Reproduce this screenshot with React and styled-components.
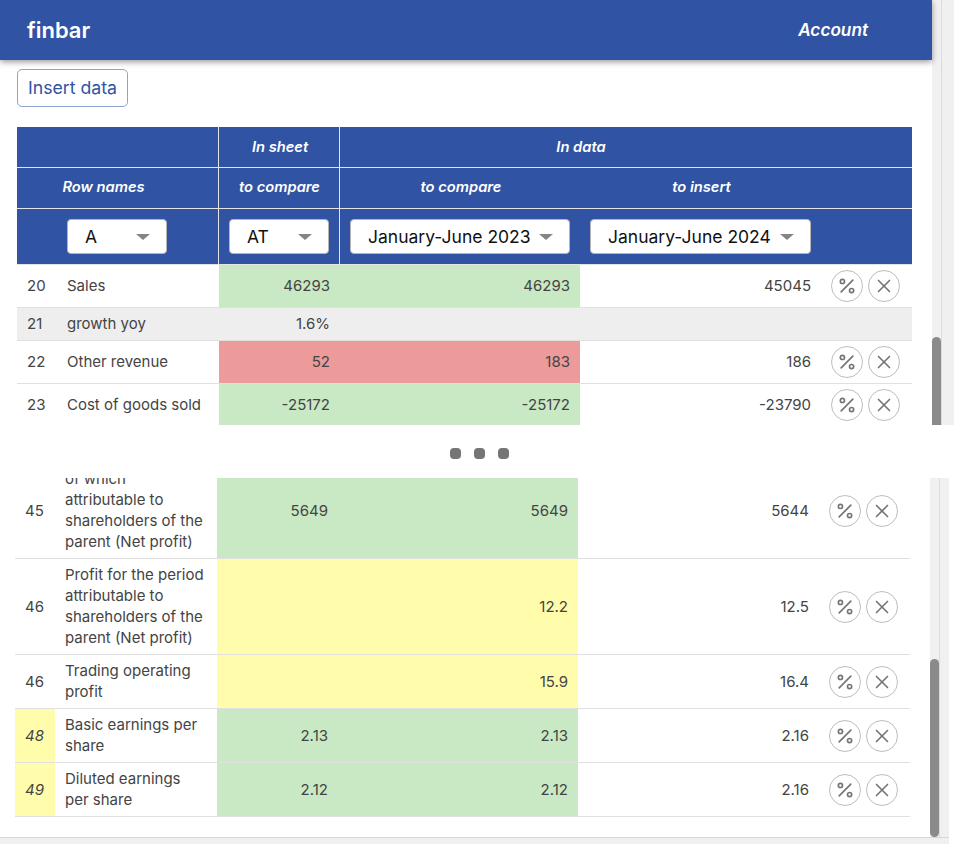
import React from 'react';
import styled, { createGlobalStyle } from 'styled-components';
import { Percent, X } from 'lucide-react';

const GlobalStyle = createGlobalStyle`
  html, body {
    margin: 0;
    padding: 0;
    background: #ffffff;
    overflow: hidden;
  }
  body {
    font-family: Inter, "Liberation Sans", sans-serif;
    font-size: 15px;
    color: #444444;
  }
`;

const Page = styled.div`
  width: 955px;
  height: 845px;
  overflow: hidden;
  display: flex;
  flex-direction: column;
`;

// Upper part of the picture, scrolled to the top of the page
const TopPane = styled.div`
  height: 425px;
  width: 954px;
  flex: none;
  display: flex;
  overflow: hidden;
`;

const TopContent = styled.div`
  width: 932px;
  flex: none;
`;

const Header = styled.header`
  height: 60px;
  background: #3153a4;
  color: #ffffff;
  display: flex;
  align-items: center;
  justify-content: space-between;
  padding: 0 64px 0 27px;
  box-shadow: 0 2px 6px rgba(0, 0, 0, 0.4);
  position: relative;
`;

const Logo = styled.div`
  font-size: 22px;
  font-weight: 600;
`;

const AccountLink = styled.div`
  padding-bottom: 1px;
  font-size: 17.2px;
  font-weight: 600;
  font-style: italic;
`;

const Toolbar = styled.div`
  padding: 9px 0 20px 17px;
`;

const InsertButton = styled.button`
  display: block;
  width: 111px;
  height: 38px;
  padding: 0 0 2px;
  background: #ffffff;
  border: 1px solid #8ea3d3;
  border-radius: 5px;
  color: #3153a4;
  font-family: inherit;
  font-size: 17.7px;
`;

const TableWrap = styled.div`
  padding-left: 17px;
`;

const Table = styled.table`
  width: 895px;
  table-layout: fixed;
  border-collapse: separate;
  border-spacing: 0;
`;

const HeadCell = styled.th`
  height: 40px;
  padding: 0 ${props => props.$shift || 0}px 0 ${props => props.$nudge || 0}px;
  background: #3153a4;
  color: #ffffff;
  font-size: 14.7px;
  font-weight: 600;
  font-style: italic;
  text-align: center;
  border-bottom: 1px solid #e4e4e4;
  border-right: ${props => (props.$divider ? '1px solid #e4e4e4' : 'none')};
`;

const SubHeadCell = styled(HeadCell)`
  height: 38px;
  padding-bottom: 2px;
`;

const SelectCell = styled(HeadCell)`
  height: 55px;
  font-style: normal;
  font-weight: 400;
`;

const SelectBox = styled.div`
  box-sizing: border-box;
  width: ${props => props.$width}px;
  height: 35px;
  margin: 0 auto;
  padding: 0 16px 0 17px;
  display: flex;
  align-items: center;
  justify-content: space-between;
  background: #ffffff;
  border: 1px solid #b5b5b5;
  border-radius: 4px;
  color: #111111;
  font-size: 17.5px;
`;

const Arrow = styled.span`
  width: 0;
  height: 0;
  border-left: 7px solid transparent;
  border-right: 7px solid transparent;
  border-top: 6px solid #858585;
`;

const toneColors = {
  green: '#c8e9c3',
  red: '#ed9a9b',
  yellow: '#fffcac',
  gray: '#eeeeee',
};

const Cell = styled.td`
  padding: 5px 10px 6px 10px;
  line-height: 21px;
  text-align: ${props => (props.$right ? 'right' : 'left')};
  font-style: ${props => (props.$italic ? 'italic' : 'normal')};
  background: ${props => toneColors[props.$tone] || 'transparent'};
  border-bottom: 1px solid #e0e0e0;
  overflow: hidden;
`;

const ActionsCell = styled(Cell)`
  padding: 5px 0 5px 10px;
`;

const Actions = styled.div`
  display: flex;
  gap: 5px;
`;

const RoundButton = styled.button`
  box-sizing: border-box;
  width: 32px;
  height: 32px;
  padding: 0;
  display: flex;
  align-items: center;
  justify-content: center;
  background: #ffffff;
  border: 1px solid #bdbdbd;
  border-radius: 50%;
  color: #757575;
`;

const Gap = styled.div`
  height: 53px;
  flex: none;
  padding-top: 4px;
  box-sizing: border-box;
  display: flex;
  align-items: center;
  justify-content: center;
  gap: 13px;
  padding-left: 4px;
`;

const Dot = styled.span`
  width: 11px;
  height: 11px;
  border-radius: 4px;
  background: #757575;
`;

// Lower part of the picture, scrolled to the end of the page
const BottomPane = styled.div`
  height: 367px;
  width: 949px;
  flex: none;
  display: flex;
  flex-direction: column;
  overflow: hidden;
`;

const BottomRow = styled.div`
  flex: 1;
  min-height: 0;
  display: flex;
`;

const BottomContent = styled.div`
  width: 930px;
  flex: none;
  padding-left: 15px;
  box-sizing: border-box;
  overflow: hidden;
`;

const ScrolledTable = styled(Table)`
  margin-top: -15px;
`;

const HScrollbar = styled.div`
  box-sizing: border-box;
  height: 7px;
  flex: none;
  margin-bottom: 1px;
  background: #f0f0f0;
  border-top: 1px solid #d8d8d8;
`;

const ScrollTrack = styled.div`
  width: ${props => props.$width}px;
  flex: none;
  box-sizing: border-box;
  background: #f0f0f0;
  display: flex;
  flex-direction: column;
`;

const ScrollColumn = styled.div`
  width: 10px;
  box-sizing: border-box;
  flex: 1;
  border-right: 1px solid #dcdcdc;
  display: flex;
  flex-direction: column;
  justify-content: ${props => (props.$end ? 'flex-end' : 'flex-start')};
`;

const Thumb = styled.div`
  height: ${props => props.$height}px;
  flex: none;
  margin-top: ${props => props.$top || 0}px;
  background: #8a8a8a;
  border-radius: ${props => props.$radius};
`;

const columns = [40, 162, 121, 240, 241, 91];

const topRows = [
  { num: '20', name: 'Sales', sheet: '46293', data: '46293', insert: '45045', tone: 'green' },
  { num: '21', name: 'growth yoy', sheet: '1.6%', gray: true },
  { num: '22', name: 'Other revenue', sheet: '52', data: '183', insert: '186', tone: 'red' },
  { num: '23', name: 'Cost of goods sold', sheet: '-25172', data: '-25172', insert: '-23790', tone: 'green' },
];

const bottomRows = [
  { num: '45', name: 'of which attributable to shareholders of the parent (Net profit)', sheet: '5649', data: '5649', insert: '5644', tone: 'green' },
  { num: '46', name: 'Profit for the period attributable to shareholders of the parent (Net profit)', sheet: '', data: '12.2', insert: '12.5', tone: 'yellow' },
  { num: '46', name: 'Trading operating profit', sheet: '', data: '15.9', insert: '16.4', tone: 'yellow' },
  { num: '48', name: 'Basic earnings per share', sheet: '2.13', data: '2.13', insert: '2.16', tone: 'green', flagged: true },
  { num: '49', name: 'Diluted earnings per share', sheet: '2.12', data: '2.12', insert: '2.16', tone: 'green', flagged: true },
];

const ColGroup = () => (
  <colgroup>
    {columns.map((width, i) => (
      <col key={i} width={width} />
    ))}
  </colgroup>
);

const Select = ({ value, width }) => (
  <SelectBox $width={width}>
    <span>{value}</span>
    <Arrow />
  </SelectBox>
);

const DataRow = ({ row }) => {
  const rowTone = row.gray ? 'gray' : undefined;
  return (
    <tr>
      <Cell $tone={row.flagged ? 'yellow' : rowTone} $italic={row.flagged}>{row.num}</Cell>
      <Cell $tone={rowTone}>{row.name}</Cell>
      <Cell $right $tone={rowTone || row.tone}>{row.sheet}</Cell>
      <Cell $right $tone={rowTone || row.tone}>{row.data}</Cell>
      <Cell $right $tone={rowTone}>{row.insert}</Cell>
      {row.gray ? (
        <Cell $tone="gray" />
      ) : (
        <ActionsCell>
          <Actions>
            <RoundButton><Percent size={20} strokeWidth={2} /></RoundButton>
            <RoundButton><X size={22} strokeWidth={1.8} /></RoundButton>
          </Actions>
        </ActionsCell>
      )}
    </tr>
  );
};

export default function App() {
  return (
    <Page>
      <GlobalStyle />
      <TopPane>
        <TopContent>
          <Header>
            <Logo>finbar</Logo>
            <AccountLink>Account</AccountLink>
          </Header>
          <Toolbar>
            <InsertButton>Insert data</InsertButton>
          </Toolbar>
          <TableWrap>
            <Table>
              <ColGroup />
              <thead>
                <tr>
                  <HeadCell colSpan={2} $divider />
                  <HeadCell $divider $nudge={2}>In sheet</HeadCell>
                  <HeadCell colSpan={2} $nudge={1}>In data</HeadCell>
                  <HeadCell />
                </tr>
                <tr>
                  <SubHeadCell colSpan={2} $divider $shift={28}>Row names</SubHeadCell>
                  <SubHeadCell $divider $nudge={1}>to compare</SubHeadCell>
                  <SubHeadCell $nudge={2}>to compare</SubHeadCell>
                  <SubHeadCell $nudge={2}>to insert</SubHeadCell>
                  <SubHeadCell />
                </tr>
                <tr>
                  <SelectCell colSpan={2} $divider $shift={1}><Select value="A" width={100} /></SelectCell>
                  <SelectCell $divider><Select value="AT" width={100} /></SelectCell>
                  <SelectCell><Select value="January-June 2023" width={220} /></SelectCell>
                  <SelectCell><Select value="January-June 2024" width={221} /></SelectCell>
                  <SelectCell />
                </tr>
              </thead>
              <tbody>
                {topRows.map(row => (
                  <DataRow key={row.num} row={row} />
                ))}
              </tbody>
            </Table>
          </TableWrap>
        </TopContent>
        <ScrollTrack $width={22}>
          <ScrollColumn>
            <Thumb $top={337} $height={200} $radius="5px 5px 0 0" />
          </ScrollColumn>
        </ScrollTrack>
      </TopPane>

      <Gap>
        <Dot />
        <Dot />
        <Dot />
      </Gap>

      <BottomPane>
        <BottomRow>
          <BottomContent>
            <ScrolledTable>
              <ColGroup />
              <tbody>
                {bottomRows.map((row, i) => (
                  <DataRow key={i} row={row} />
                ))}
              </tbody>
            </ScrolledTable>
          </BottomContent>
          <ScrollTrack $width={19}>
            <ScrollColumn $end>
              <Thumb $height={178} $radius="5px" />
            </ScrollColumn>
          </ScrollTrack>
        </BottomRow>
        <HScrollbar />
      </BottomPane>
    </Page>
  );
}
